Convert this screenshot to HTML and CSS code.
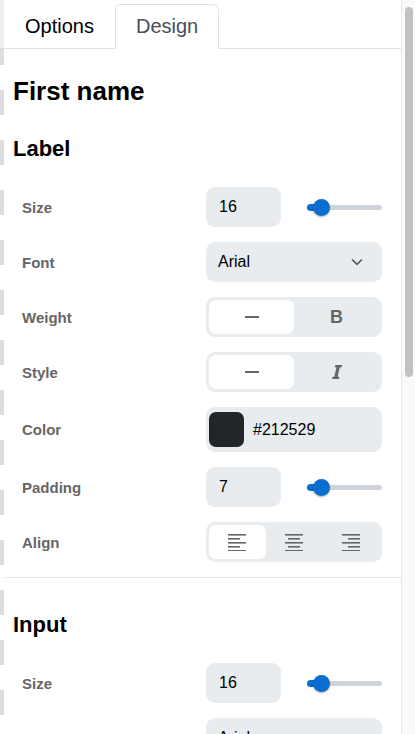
FILE: index.html
```html
<!DOCTYPE html>
<html lang="en">
<head>
  <meta charset="UTF-8">
  <title>Field Design</title>
  <link rel="stylesheet" href="styles.css">
</head>
<body>
  <div class="page">
    <div class="edge"></div>

    <div class="panel">
      <div class="tabs">
        <div class="tab">Options</div>
        <div class="tab active">Design</div>
      </div>

      <h1 class="title">First name</h1>

      <div class="section">
        <h2>Label</h2>

        <div class="row">
          <span class="label">Size</span>
          <div class="num-slider">
            <div class="box">16</div>
            <div class="slider">
              <div class="fill"></div>
              <div class="thumb"></div>
            </div>
          </div>
        </div>

        <div class="row">
          <span class="label">Font</span>
          <div class="box select">
            <span>Arial</span>
            <svg width="12" height="8" viewBox="0 0 12 8"><polyline points="1,1.5 6,6.3 11,1.5" fill="none" stroke="#555" stroke-width="1.6"/></svg>
          </div>
        </div>

        <div class="row">
          <span class="label">Weight</span>
          <div class="segmented">
            <div class="seg on"><svg width="14" height="2" viewBox="0 0 14 2"><rect width="14" height="2" fill="#666"/></svg></div>
            <div class="seg"><span class="bold">B</span></div>
          </div>
        </div>

        <div class="row">
          <span class="label">Style</span>
          <div class="segmented">
            <div class="seg on"><svg width="14" height="2" viewBox="0 0 14 2"><rect width="14" height="2" fill="#666"/></svg></div>
            <div class="seg">
              <svg width="12" height="16" viewBox="0 0 12 16"><polygon points="4.4,1 11.2,1 10.7,3.2 8.8,3.2 6.6,12.8 8.4,12.8 7.9,15 1,15 1.5,12.8 3.3,12.8 5.5,3.2 3.9,3.2" fill="#666"/></svg>
            </div>
          </div>
        </div>

        <div class="row tall">
          <span class="label">Color</span>
          <div class="box color">
            <span class="swatch"></span>
            <span>#212529</span>
          </div>
        </div>

        <div class="row">
          <span class="label">Padding</span>
          <div class="num-slider">
            <div class="box">7</div>
            <div class="slider">
              <div class="fill"></div>
              <div class="thumb"></div>
            </div>
          </div>
        </div>

        <div class="row">
          <span class="label">Align</span>
          <div class="segmented three">
            <div class="seg on">
              <svg width="18" height="17" viewBox="0 0 18 17" fill="#666"><rect x="0" y="0" width="18" height="1.6"/><rect x="0" y="4" width="12" height="1.6"/><rect x="0" y="8" width="18" height="1.6"/><rect x="0" y="12" width="12" height="1.6"/><rect x="0" y="16" width="18" height="1.6"/></svg>
            </div>
            <div class="seg">
              <svg width="18" height="17" viewBox="0 0 18 17" fill="#666"><rect x="0" y="0" width="18" height="1.6"/><rect x="3" y="4" width="12" height="1.6"/><rect x="0" y="8" width="18" height="1.6"/><rect x="3" y="12" width="12" height="1.6"/><rect x="0" y="16" width="18" height="1.6"/></svg>
            </div>
            <div class="seg">
              <svg width="18" height="17" viewBox="0 0 18 17" fill="#666"><rect x="0" y="0" width="18" height="1.6"/><rect x="6" y="4" width="12" height="1.6"/><rect x="0" y="8" width="18" height="1.6"/><rect x="6" y="12" width="12" height="1.6"/><rect x="0" y="16" width="18" height="1.6"/></svg>
            </div>
          </div>
        </div>
      </div>

      <hr class="divider">

      <div class="section">
        <h2 class="spaced">Input</h2>

        <div class="row">
          <span class="label">Size</span>
          <div class="num-slider">
            <div class="box">16</div>
            <div class="slider">
              <div class="fill"></div>
              <div class="thumb"></div>
            </div>
          </div>
        </div>

        <div class="row">
          <span class="label">Font</span>
          <div class="box select">
            <span>Arial</span>
            <svg width="12" height="8" viewBox="0 0 12 8"><polyline points="1,1.5 6,6.3 11,1.5" fill="none" stroke="#555" stroke-width="1.6"/></svg>
          </div>
        </div>
      </div>
    </div>

    <div class="scrollbar">
      <div class="scroll-thumb"></div>
    </div>
  </div>
</body>
</html>
```

FILE: styles.css
```css
body {
  margin: 0;
  font-family: "Liberation Sans", Arial, sans-serif;
  color: #000;
  background: #fff;
}

.page {
  display: flex;
  height: 734px;
  overflow: hidden;
}

.edge {
  width: 4px;
  flex-shrink: 0;
  background:
    linear-gradient(#eceef0, #eceef0) 0 0 / 100% 48px no-repeat,
    repeating-linear-gradient(to bottom, #dcdcdc 0 25px, #fff 25px 50px) 0 40px / 100% 100%;
}

.panel {
  flex: 1;
  min-width: 0;
  background: #fff;
}

/* tabs */
.tabs {
  display: flex;
  margin-top: 4px;
  border-bottom: 1px solid #dee2e6;
}

.tab {
  font-size: 20px;
  line-height: 24px;
  padding: 9px 20px 10px;
  border: 1px solid transparent;
  border-radius: 6px 6px 0 0;
  margin-bottom: -1px;
  color: #000;
}

.tab.active {
  color: #495057;
  border-color: #dee2e6 #dee2e6 #fff;
  background: #fff;
}

.title {
  font-size: 26px;
  line-height: 30px;
  font-weight: bold;
  margin: 27px 0 0 9px;
}

.section {
  padding: 0 19px 0 9px;
}

h2 {
  font-size: 22px;
  line-height: 24px;
  font-weight: bold;
  margin: 31px 0 26px;
}

h2.spaced {
  margin-top: 35px;
}

/* rows */
.row {
  display: grid;
  grid-template-columns: 1fr 176px;
  align-items: center;
  height: 40px;
  padding-left: 9px;
  margin-bottom: 15px;
}

.row.tall {
  height: 45px;
}

.label {
  font-size: 15px;
  font-weight: bold;
  color: #666;
}

.box {
  height: 40px;
  box-sizing: border-box;
  background: #e9ecef;
  border-radius: 9px;
  padding: 0 13px;
  display: flex;
  align-items: center;
  font-size: 16px;
}

.select {
  justify-content: space-between;
  padding-right: 19px;
  padding-left: 12px;
}

.color {
  height: 45px;
  padding: 0 0 0 3px;
  gap: 9px;
}

.swatch {
  width: 35px;
  height: 35px;
  border-radius: 7px;
  background: #212529;
}

/* number + slider */
.num-slider {
  display: grid;
  grid-template-columns: 75px 75px;
  gap: 26px;
  align-items: center;
}

.slider {
  position: relative;
  height: 5px;
  border-radius: 3px;
  background: #cfd4da;
}

.fill {
  width: 14px;
  height: 7px;
  margin-top: -1px;
  border-radius: 4px;
  background: #0a6ed1;
}

.thumb {
  position: absolute;
  left: 6px;
  top: -6px;
  width: 17px;
  height: 17px;
  border-radius: 50%;
  background: #0a6ed1;
  box-shadow: 0 1px 2px rgba(0, 0, 0, 0.35);
}

/* segmented */
.segmented {
  display: grid;
  grid-template-columns: 1fr 1fr;
  height: 40px;
  box-sizing: border-box;
  padding: 3px;
  border-radius: 9px;
  background: #e9ecef;
}

.segmented.three {
  grid-template-columns: 1fr 1fr 1fr;
}

.seg {
  display: flex;
  align-items: center;
  justify-content: center;
  border-radius: 7px;
}

.seg.on {
  background: #fff;
}

.bold {
  font-size: 18px;
  font-weight: bold;
  color: #666;
}

.divider {
  border: 0;
  border-top: 1px solid #e5e5e5;
  margin: 0;
}

/* scrollbar */
.scrollbar {
  width: 14px;
  flex-shrink: 0;
  box-sizing: border-box;
  border-left: 1px solid #e8e8e8;
  background: #fafafa;
  padding: 7px 2px 0 3px;
}

.scroll-thumb {
  height: 370px;
  border-radius: 4px;
  background: #c1c1c1;
}
```
